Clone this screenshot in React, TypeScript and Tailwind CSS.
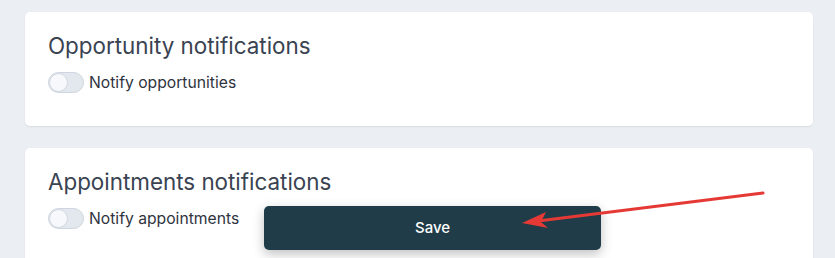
export default function App() {
  return (
    <div
      className="relative h-[258px] w-[835px] overflow-hidden bg-[#ebeef3] pl-[25px] pr-[22px] pt-[12px]"
      style={{ fontFamily: "Inter, 'Noto Sans', sans-serif" }}
    >
      <div className="flex flex-col gap-[22px]">
        <Card title="Opportunity notifications" label="Notify opportunities" />
        <Card title="Appointments notifications" label="Notify appointments" />
      </div>

      {/* Floating save bar */}
      <button className="absolute left-[264px] top-[206px] flex h-[44px] w-[337px] items-center justify-center rounded-[5px] bg-[#1f3c48] text-[15px] font-medium text-white shadow-[0_4px_12px_rgba(0,0,0,0.25)]">
        Save
      </button>

      {/* Annotation arrow */}
      <svg
        className="pointer-events-none absolute left-0 top-0"
        width="835"
        height="258"
        viewBox="0 0 835 258"
        aria-hidden="true"
      >
        <line x1="763" y1="193" x2="530" y2="222" stroke="#e53935" strokeWidth="3" strokeLinecap="round" />
        <polygon points="522,223 546,212 541,222 548,228" fill="#e53935" />
      </svg>
    </div>
  );
}

function Card({ title, label }: { title: string; label: string }) {
  return (
    <div className="h-[114px] rounded-[5px] bg-white px-[23px] pt-[19px] shadow-[0_1px_2px_rgba(0,0,0,0.08)]">
      <h2 className="text-[22.4px] font-normal leading-[30px] text-[#3a4352]">{title}</h2>
      <div className="mt-[11px] flex items-center gap-[5px]">
        <Toggle />
        <span className="text-[15.7px] leading-[20px] text-[#2f3440]">{label}</span>
      </div>
    </div>
  );
}

function Toggle() {
  return (
    <span className="relative inline-flex h-[21px] w-[36px] items-center rounded-full border border-[#cfd5de] bg-[#e3e7ee]">
      <span className="h-[19px] w-[19px] rounded-full border border-[#d3d9e2] bg-[#f6f8fb]" />
    </span>
  );
}
